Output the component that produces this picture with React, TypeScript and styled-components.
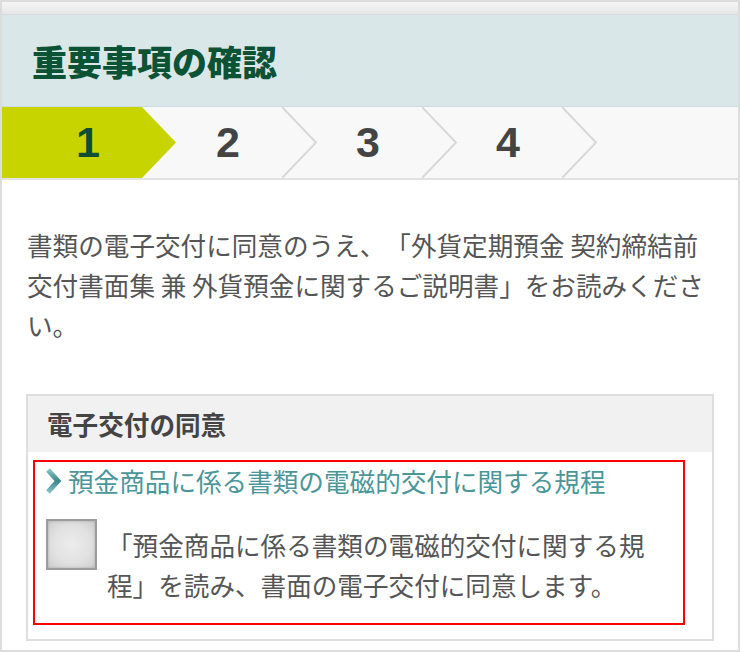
import React from 'react'
import styled, { createGlobalStyle } from 'styled-components'

const STEP_WIDTH = 140
const STEP_HEIGHT = 71
const ARROW = 34

const GlobalStyle = createGlobalStyle`
  html, body {
    margin: 0;
    padding: 0;
    background: #fff;
  }
  body {
    font-family: 'Noto Sans CJK JP', 'Noto Sans', sans-serif;
    text-spacing-trim: space-all;
    font-feature-settings: normal;
  }
`

const Frame = styled.div`
  box-sizing: border-box;
  width: 740px;
  height: 652px;
  border: 2px solid #dcdcdc;
  background: #fff;
  overflow: hidden;
  display: flex;
  flex-direction: column;
`

const TopStrip = styled.div`
  height: 12px;
  flex-shrink: 0;
  background: linear-gradient(180deg, #f5f5f5 0%, #e6e6e6 100%);
  border-bottom: 1px solid #d6d9da;
`

const Header = styled.header`
  height: 91px;
  flex-shrink: 0;
  display: flex;
  align-items: center;
  padding-left: 30px;
  background: #dae7e8;
  border-bottom: 1px solid #cddcdd;
`

const Title = styled.h1`
  margin: 0;
  font-size: 35px;
  font-weight: 900;
  line-height: 1;
  color: #0c5336;
  letter-spacing: 0;
`

const StepBar = styled.nav`
  height: ${STEP_HEIGHT}px;
  flex-shrink: 0;
  display: flex;
  background: #f8f8f8;
  border-bottom: 2px solid #e2e2e2;
`

const Step = styled.div<{ $active?: boolean }>`
  position: relative;
  width: ${STEP_WIDTH}px;
  flex-shrink: 0;
  background: ${(p) => (p.$active ? '#c8d400' : 'transparent')};
`

const StepNum = styled.span<{ $active?: boolean }>`
  position: relative;
  z-index: 2;
  display: block;
  width: ${STEP_WIDTH + ARROW - 2}px;
  text-align: center;
  line-height: ${STEP_HEIGHT}px;
  font-family: 'Liberation Sans', Arial, sans-serif;
  font-weight: 700;
  font-size: 43px;
  color: ${(p) => (p.$active ? '#0f4d35' : '#444')};
`

const StepArrow = styled.svg`
  position: absolute;
  top: 0;
  left: ${STEP_WIDTH}px;
  z-index: 1;
`

const Body = styled.main`
  padding: 45px 24px 0;
`

const Lead = styled.p`
  margin: 0 0 49px 1px;
  font-size: 25.6px;
  line-height: 40px;
  color: #555;
`

const ConsentBox = styled.section`
  border: 2px solid #dedede;
  padding-bottom: 14px;
`

const BoxHead = styled.h2`
  margin: 0;
  height: 56px;
  line-height: 56px;
  padding-left: 19px;
  background: #f1f1f1;
  font-size: 25.6px;
  font-weight: 700;
  color: #444;
`

const Highlight = styled.div`
  margin: 8px 27px 0 5px;
  border: 2px solid #ff0000;
  padding: 0 20px 18px 0;
`

const DocLink = styled.a`
  display: flex;
  align-items: center;
  gap: 6px;
  padding-left: 9px;
  line-height: 38px;
  font-size: 25.6px;
  color: #4a9698;
  text-decoration: none;
`

const CheckRow = styled.label`
  display: flex;
  align-items: flex-start;
  gap: 10px;
  margin-top: 19px;
  padding-left: 11px;
`

const CheckBox = styled.span`
  box-sizing: border-box;
  width: 51px;
  height: 51px;
  flex-shrink: 0;
  border: 2px solid #9c9c9c;
  background: radial-gradient(circle, #ececec 0%, #e2e2e2 55%, #cdcdcd 100%);
  box-shadow: inset 0 0 3px rgba(0, 0, 0, 0.2);
`

const CheckText = styled.span`
  margin-top: 6px;
  font-size: 25.6px;
  line-height: 40px;
  color: #555;
`

const steps = [1, 2, 3, 4]

const Chevron = ({ active }: { active: boolean }) => (
  <StepArrow width={ARROW + 2} height={STEP_HEIGHT} viewBox={`0 0 ${ARROW + 2} ${STEP_HEIGHT}`}>
    {active ? (
      <polygon points={`0,0 ${ARROW},${STEP_HEIGHT / 2} 0,${STEP_HEIGHT}`} fill="#c8d400" />
    ) : (
      <polyline
        points={`0,0 ${ARROW},${STEP_HEIGHT / 2} 0,${STEP_HEIGHT}`}
        fill="none"
        stroke="#d8d8d8"
        strokeWidth="2"
      />
    )}
  </StepArrow>
)

const LinkArrow = () => (
  <svg width="18" height="28" viewBox="0 0 18 28">
    <defs>
      <linearGradient id="la" x1="0" y1="0" x2="0" y2="1">
        <stop offset="0" stopColor="#86c1c3" />
        <stop offset="0.5" stopColor="#3a878a" />
        <stop offset="1" stopColor="#86c1c3" />
      </linearGradient>
    </defs>
    <polyline
      points="4,3 14,14 4,25"
      fill="none"
      stroke="url(#la)"
      strokeWidth="5"
      strokeLinejoin="miter"
    />
  </svg>
)

export default function App() {
  return (
    <>
      <GlobalStyle />
      <Frame>
        <TopStrip />
        <Header>
          <Title>重要事項の確認</Title>
        </Header>
        <StepBar>
          {steps.map((n) => (
            <Step key={n} $active={n === 1}>
              <StepNum $active={n === 1}>{n}</StepNum>
              <Chevron active={n === 1} />
            </Step>
          ))}
        </StepBar>
        <Body>
          <Lead>
            書類の電子交付に同意のうえ、「外貨定期預金 契約締結前交付書面集 兼 外貨預金に関するご説明書」をお読みください。
          </Lead>
          <ConsentBox>
            <BoxHead>電子交付の同意</BoxHead>
            <Highlight>
              <DocLink href="#">
                <LinkArrow />
                預金商品に係る書類の電磁的交付に関する規程
              </DocLink>
              <CheckRow>
                <CheckBox />
                <CheckText>
                  「預金商品に係る書類の電磁的交付に関する規程」を読み、書面の電子交付に同意します。
                </CheckText>
              </CheckRow>
            </Highlight>
          </ConsentBox>
        </Body>
      </Frame>
    </>
  )
}
